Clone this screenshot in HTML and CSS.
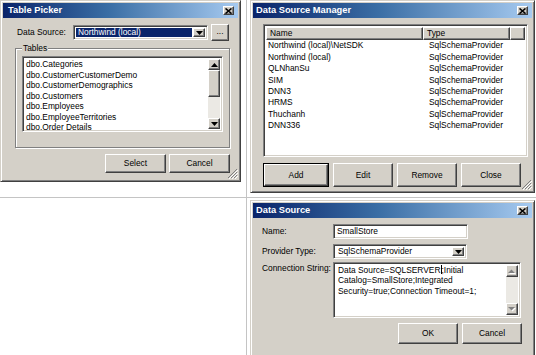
FILE: index.html
```html
<!DOCTYPE html>
<html>
<head>
<meta charset="utf-8">
<link rel="stylesheet" href="styles.css">
</head>
<body>
<div class="desk">
  <section class="q q-tl">
    <div class="win win-tp">
      <div class="tbar tbar-tp"><span class="ttl">Table Picker</span><span class="xbtn"><svg width="7" height="6" viewBox="0 0 7 6"><path d="M0.5 0.5L6.5 5.5M6.5 0.5L0.5 5.5" stroke="#000" stroke-width="1.6"/></svg></span></div>
      <div class="tp-body">
        <div class="ds-row">
          <span class="ds-lbl">Data Source:</span>
          <div class="sunk combo tp-combo">
            <span class="combo-val sel">Northwind (local)</span>
            <span class="raised dd"><svg width="7" height="4" viewBox="0 0 7 4"><path d="M0 0H7L3.5 4Z" fill="#000"/></svg></span>
          </div>
          <span class="raised btn dots">...</span>
        </div>
        <div class="grp">
          <span class="grp-lbl">Tables</span>
          <div class="sunk list tp-list">
            <ul class="items">
              <li>dbo.Categories</li>
              <li>dbo.CustomerCustomerDemo</li>
              <li>dbo.CustomerDemographics</li>
              <li>dbo.Customers</li>
              <li>dbo.Employees</li>
              <li>dbo.EmployeeTerritories</li>
              <li>dbo.Order Details</li>
            </ul>
            <div class="vscroll">
              <span class="raised arr"><svg width="7" height="4" viewBox="0 0 7 4"><path d="M0 4H7L3.5 0Z" fill="#000"/></svg></span>
              <span class="raised thumb"></span>
              <span class="track"></span>
              <span class="raised arr"><svg width="7" height="4" viewBox="0 0 7 4"><path d="M0 0H7L3.5 4Z" fill="#000"/></svg></span>
            </div>
          </div>
        </div>
        <div class="btnrow tp-btns">
          <span class="raised btn bw">Select</span>
          <span class="raised btn bw">Cancel</span>
        </div>
      </div>
      <svg class="grip" width="11" height="11" viewBox="0 0 11 11"><path d="M10 1L1 10M10 4L4 10M10 7L7 10" stroke="#808080" stroke-width="1"/><path d="M11 2L2 11M11 5L5 11M11 8L8 11" stroke="#fff" stroke-width="1"/></svg>
    </div>
  </section>

  <section class="q q-tr">
    <div class="win win-dsm">
      <div class="tbar"><span class="ttl">Data Source Manager</span><span class="xbtn"><svg width="7" height="6" viewBox="0 0 7 6"><path d="M0.5 0.5L6.5 5.5M6.5 0.5L0.5 5.5" stroke="#000" stroke-width="1.6"/></svg></span></div>
      <div class="dsm-body">
        <div class="sunk lv">
          <div class="lv-head">
            <span class="raised hcell h-name">Name</span>
            <span class="raised hcell h-type">Type</span>
            <span class="raised hcell h-rest"></span>
          </div>
          <div class="lv-rows">
            <div class="lv-row"><span class="c-name">Northwind (local)\NetSDK</span><span class="c-type">SqlSchemaProvider</span></div>
            <div class="lv-row"><span class="c-name">Northwind (local)</span><span class="c-type">SqlSchemaProvider</span></div>
            <div class="lv-row"><span class="c-name">QLNhanSu</span><span class="c-type">SqlSchemaProvider</span></div>
            <div class="lv-row"><span class="c-name">SIM</span><span class="c-type">SqlSchemaProvider</span></div>
            <div class="lv-row"><span class="c-name">DNN3</span><span class="c-type">SqlSchemaProvider</span></div>
            <div class="lv-row"><span class="c-name">HRMS</span><span class="c-type">SqlSchemaProvider</span></div>
            <div class="lv-row"><span class="c-name">Thuchanh</span><span class="c-type">SqlSchemaProvider</span></div>
            <div class="lv-row"><span class="c-name">DNN336</span><span class="c-type">SqlSchemaProvider</span></div>
          </div>
        </div>
        <div class="btnrow dsm-btns">
          <span class="defbtn"><span class="raised btn b-add">Add</span></span>
          <span class="raised btn b60">Edit</span>
          <span class="raised btn b60">Remove</span>
          <span class="raised btn b60">Close</span>
        </div>
      </div>
      <svg class="grip" width="11" height="11" viewBox="0 0 11 11"><path d="M10 1L1 10M10 4L4 10M10 7L7 10" stroke="#808080" stroke-width="1"/><path d="M11 2L2 11M11 5L5 11M11 8L8 11" stroke="#fff" stroke-width="1"/></svg>
    </div>
  </section>

  <section class="q q-bl"></section>

  <section class="q q-br">
    <div class="win win-ds">
      <div class="tbar"><span class="ttl">Data Source</span><span class="xbtn"><svg width="7" height="6" viewBox="0 0 7 6"><path d="M0.5 0.5L6.5 5.5M6.5 0.5L0.5 5.5" stroke="#000" stroke-width="1.6"/></svg></span></div>
      <div class="ds-body">
        <div class="f-row r-name">
          <span class="f-lbl">Name:</span>
          <span class="sunk tbox">SmallStore</span>
        </div>
        <div class="f-row r-prov">
          <span class="f-lbl">Provider Type:</span>
          <div class="sunk combo ds-combo">
            <span class="combo-val">SqlSchemaProvider</span>
            <span class="raised dd"><svg width="7" height="4" viewBox="0 0 7 4"><path d="M0 0H7L3.5 4Z" fill="#000"/></svg></span>
          </div>
        </div>
        <div class="f-row r-conn">
          <span class="f-lbl conn-lbl">Connection String:</span>
          <div class="sunk tarea">
            <div class="ta-text">Data Source=SQLSERVER<span class="caret"></span>;Initial<br>Catalog=SmallStore;Integrated<br>Security=true;Connection Timeout=1;</div>
            <div class="vscroll ta-scroll">
              <span class="raised arr dis"><svg width="8" height="5" viewBox="0 0 8 5"><path d="M1 5H8L4.5 1.5Z" fill="#fff"/><path d="M0 4H7L3.5 0.5Z" fill="#808080"/></svg></span>
              <span class="track"></span>
              <span class="raised arr dis"><svg width="8" height="5" viewBox="0 0 8 5"><path d="M1 1H8L4.5 4.5Z" fill="#fff"/><path d="M0 0H7L3.5 3.5Z" fill="#808080"/></svg></span>
            </div>
          </div>
        </div>
        <div class="btnrow ds-btns">
          <span class="raised btn b60">OK</span>
          <span class="raised btn b60">Cancel</span>
        </div>
      </div>
    </div>
  </section>
</div>
</body>
</html>
```

FILE: styles.css
```css
* { box-sizing: border-box; margin: 0; padding: 0; }
html, body { width: 536px; height: 355px; overflow: hidden; background: #fff; }
body {
  font-family: "Liberation Sans", Arial, sans-serif;
  font-size: 8.4px;
  line-height: 1;
  color: #000;
}
ul { list-style: none; }

.desk {
  display: grid;
  grid-template-columns: 247px 289px;
  grid-template-rows: 198px 157px;
  width: 536px;
  height: 355px;
}
.q { position: relative; overflow: hidden; }
.q-tl { border-right: 1px solid #c4c4c4; border-bottom: 1px solid #c4c4c4; }
.q-tr { padding-left: 3px; border-bottom: 1px solid #c4c4c4; }
.q-bl { border-right: 1px solid #c4c4c4; }
.q-br { padding: 2px 0 0 3px; }

/* window frame */
.win {
  position: relative;
  background: #d4d0c8;
  border: 1px solid;
  border-color: #d4d0c8 #404040 #404040 #d4d0c8;
  box-shadow: inset 1px 1px #fff, inset -1px -1px #808080;
  padding: 2px;
  display: flex;
  flex-direction: column;
}
.win-tp { width: 241px; height: 182px; }
.win-dsm { width: 285px; height: 193px; }
.win-ds { width: 285px; height: 170px; }

.tbar {
  flex: none;
  height: 15px;
  background: linear-gradient(90deg, #0a246a 0%, #3a6ea5 45%, #a6caf0 100%);
  display: flex;
  align-items: center;
  justify-content: space-between;
  padding: 0 4px 0 3px;
}
.tbar-tp { padding-left: 5px; }
.ttl { color: #fff; font-weight: bold; font-size: 9.3px; }
.xbtn {
  width: 11px; height: 9px;
  display: flex; align-items: center; justify-content: center;
  background: #d4d0c8;
  border: 1px solid;
  border-color: #fff #404040 #404040 #fff;
  box-shadow: inset -1px -1px #808080;
}

.sunk {
  background: #fff;
  border: 1px solid;
  border-color: #808080 #fff #fff #808080;
  box-shadow: inset 1px 1px #404040, inset -1px -1px #d4d0c8;
}
.raised {
  background: #d4d0c8;
  border: 1px solid;
  border-color: #fff #404040 #404040 #fff;
  box-shadow: inset -1px -1px #808080;
}
.btn { display: flex; align-items: center; justify-content: center; }
.grip { position: absolute; right: 2px; bottom: 2px; }

/* combo */
.combo { display: flex; align-items: stretch; padding: 2px; }
.combo-val { flex: 1; display: flex; align-items: center; padding-left: 2px; white-space: nowrap; }
.combo-val.sel { background: #0a246a; color: #fff; margin-right: 1px; }
.dd { width: 12px; flex: none; display: flex; align-items: center; justify-content: center; }

/* Table picker */
.tp-body { padding: 6px 7px 0 12px; display: flex; flex-direction: column; }
.ds-row { display: flex; align-items: center; height: 17px; }
.ds-lbl { width: 56px; margin-left: 2px; }
.tp-combo { width: 135px; height: 15px; }
.dots { width: 18px; height: 17px; margin-left: 3px; padding-bottom: 2px; }

.grp {
  position: relative;
  margin-top: 7px;
  width: 215px;
  height: 100px;
  border: 1px solid #808080;
  box-shadow: inset 1px 1px #fff, 1px 1px #fff;
  padding: 7px 6px 0 6px;
}
.grp-lbl {
  position: absolute; top: -6px; left: 6px;
  background: #d4d0c8; padding: 0 1px; line-height: 10px;
}
.list { display: flex; }
.tp-list { width: 201px; height: 76px; padding: 2px; }
.items { flex: 1; padding-left: 1px; }
.items li { line-height: 10.5px; white-space: nowrap; }

.vscroll { width: 12px; flex: none; display: flex; flex-direction: column; }
.arr { height: 11px; flex: none; display: flex; align-items: center; justify-content: center; }
.thumb { height: 27px; flex: none; }
.track { flex: 1; background: #ebe9e4; }

.btnrow { display: flex; justify-content: flex-end; }
.tp-btns { margin-top: 6px; gap: 3px; width: 215px; }
.bw { width: 61px; height: 19px; }

/* Data source manager */
.dsm-body { padding: 6px 4px 0 10px; display: flex; flex-direction: column; }
.lv { width: 265px; height: 133px; padding: 2px; display: flex; flex-direction: column; }
.lv-head { display: flex; height: 13px; flex: none; }
.hcell { display: flex; align-items: center; padding-left: 3px; }
.h-name { width: 157px; }
.h-type { width: 87px; }
.h-rest { flex: 1; }
.lv-rows { padding-top: 0; }
.lv-row { display: flex; height: 11.4px; align-items: center; white-space: nowrap; }
.c-name { width: 163px; padding-left: 2px; }
.dsm-btns { margin-top: 6px; gap: 4px; justify-content: flex-start; }
.defbtn { border: 1px solid #000; display: flex; }
.b-add { width: 64px; height: 22px; }
.b60 { width: 60px; height: 24px; }

/* Data source */
.ds-body { padding: 6px 0 0 9px; display: flex; flex-direction: column; }
.f-row { display: flex; align-items: center; }
.f-lbl { width: 71px; flex: none; }
.tbox { width: 135px; height: 15px; display: flex; align-items: center; padding-left: 3px; }
.r-prov { margin-top: 5px; }
.ds-combo { width: 134px; height: 15px; }
.r-conn { margin-top: 3px; align-items: flex-start; }
.conn-lbl { padding-top: 2px; }
.tarea { width: 188px; height: 56px; padding: 2px; display: flex; }
.ta-text { flex: 1; padding: 0 0 0 2px; line-height: 10.3px; }
.caret { display: inline-block; width: 1px; height: 9px; background: #000; vertical-align: -1px; }
.ta-scroll .arr { height: 12px; }
.ds-btns { margin-top: 5px; gap: 4px; padding-right: 10px; }
.ds-btns .b60 { height: 21px; }
```
